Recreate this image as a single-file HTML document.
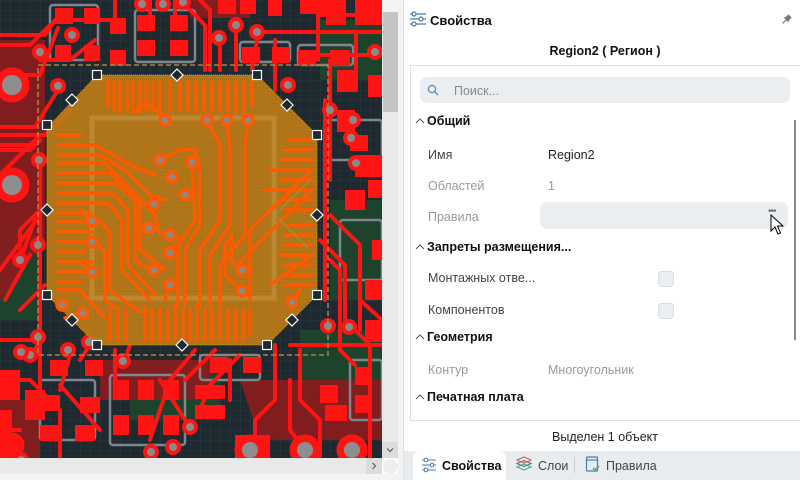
<!DOCTYPE html>
<html><head><meta charset="utf-8"><style>
*{margin:0;padding:0;box-sizing:border-box}
body{width:800px;height:480px;overflow:hidden;background:#fff;font-family:"Liberation Sans","DejaVu Sans",sans-serif;position:relative}
.a{position:absolute}
.t{font-size:12.5px;color:#222;white-space:nowrap}
.g{color:#999}
.h{font-weight:bold;font-size:12.5px;color:#111}
.cb{position:absolute;width:16px;height:16px;border:1px solid #d8dcdf;background:#eceff1;border-radius:4px}
.cv{position:absolute;width:10px;height:6px}
</style></head><body>
<svg class="a" style="left:0;top:0" width="382" height="458" viewBox="0 0 382 458">
<defs>
<pattern id="gr" width="10" height="10" patternUnits="userSpaceOnUse"><path d="M10 0H0V10" fill="none" stroke="#34424a" stroke-width="0.6"/></pattern>
<pattern id="dt" width="4" height="4" patternUnits="userSpaceOnUse"><rect width="4" height="4" fill="#bc7a16"/><rect x="1" y="1" width="1" height="1" fill="#e08a08"/></pattern>
</defs>
<rect width="382" height="458" fill="#1e2a30"/>
<rect width="382" height="458" fill="url(#gr)"/>
<g fill="#1d4a2c" opacity="0.8">
<rect x="320" y="20" width="62" height="60"/><rect x="330" y="200" width="52" height="100"/><rect x="0" y="230" width="40" height="90"/><rect x="130" y="360" width="90" height="60"/><rect x="300" y="330" width="82" height="60"/>
</g>
<g fill="#8c1c1e" opacity="0.9">
<path d="M0 40H45V240L0 300Z"/><path d="M240 380H382V440H260Z"/><path d="M0 400H40V458H0Z"/>
<rect x="190" y="0" width="60" height="18"/><rect x="100" y="360" width="110" height="40"/>
</g>
<g fill="none" stroke="#7d878d" stroke-width="2.5">
<rect x="50" y="5" width="48" height="55" rx="3"/><rect x="135" y="10" width="60" height="52" rx="3"/><rect x="240" y="42" width="50" height="20" rx="3"/><rect x="298" y="45" width="55" height="20" rx="3"/>
<rect x="40" y="380" width="55" height="60" rx="3"/><rect x="110" y="375" width="75" height="70" rx="3"/><rect x="200" y="355" width="60" height="25" rx="3"/><rect x="350" y="360" width="32" height="60" rx="3"/><rect x="330" y="120" width="52" height="40" rx="3"/><rect x="340" y="220" width="42" height="60" rx="3"/>
</g>
<g fill="none" stroke="#ff1414" stroke-width="4" stroke-linecap="round" stroke-linejoin="round">
<path d="M0 35H45L55 20H110"/><path d="M0 45H30L50 25"/><path d="M40 60H70L95 40"/><path d="M0 75H40L58 28"/>
<path d="M0 127H35L58 90"/><path d="M0 135H45L70 110"/><path d="M0 145H35"/><path d="M0 150H30L40 140"/>
<path d="M0 175L40 135"/><path d="M0 270L40 215V160"/><path d="M20 260L35 220"/><path d="M5 300L30 255"/><path d="M20 250V230L40 210"/>
<path d="M40 170V400"/><path d="M20 310L45 285"/><path d="M0 340H40"/><path d="M30 360L40 340"/>
<path d="M150 0V25"/><path d="M115 0V18"/><path d="M175 0V18"/><path d="M200 0L210 10V70"/><path d="M185 5L205 25V70"/>
<path d="M220 40V70"/><path d="M236 30V70"/><path d="M258 35L252 70"/><path d="M260 32H382"/><path d="M275 40V90"/><path d="M356 32V90"/>
<path d="M320 15H382"/><path d="M318 0V60"/><path d="M330 60V180"/><path d="M325 100V300"/><path d="M330 215L360 245V300L382 320"/>
<path d="M320 240L345 265V320L370 345V458"/><path d="M330 260L340 270V350L355 365"/><path d="M360 300V330"/>
<path d="M300 350V400L320 420V458"/><path d="M290 380V430L305 450"/><path d="M275 345V400L255 420V458"/>
<path d="M215 350L185 380"/><path d="M195 350L170 380"/><path d="M230 360V400"/>
<path d="M240 355L210 385L200 410"/><path d="M160 380L185 420"/><path d="M170 380L150 440"/>
<path d="M115 350V380"/><path d="M60 385L100 430"/><path d="M0 380H30L60 410V458"/><path d="M0 430H20"/>
<path d="M130 345L125 360"/><path d="M90 345L80 360"/><path d="M70 355L60 390"/>
<path d="M290 345H382"/><path d="M300 55H382"/>
</g>
<g fill="#ff1414">
<rect x="55" y="8" width="18" height="16"/><rect x="84" y="8" width="16" height="16"/><rect x="55" y="45" width="16" height="16"/><rect x="84" y="45" width="16" height="16"/>
<rect x="110" y="18" width="16" height="16"/><rect x="110" y="50" width="16" height="16"/>
<rect x="137" y="15" width="18" height="16"/><rect x="170" y="15" width="18" height="16"/><rect x="137" y="40" width="18" height="16"/><rect x="170" y="40" width="18" height="16"/>
<rect x="218" y="0" width="18" height="14"/><rect x="240" y="0" width="16" height="14"/><rect x="268" y="0" width="14" height="16"/><rect x="300" y="0" width="40" height="14"/><rect x="326" y="0" width="20" height="25"/><rect x="355" y="0" width="27" height="25"/>
<rect x="242" y="47" width="18" height="16"/><rect x="272" y="47" width="18" height="16"/><rect x="298" y="50" width="18" height="16"/><rect x="330" y="50" width="20" height="16"/>
<rect x="337" y="70" width="18" height="22"/><rect x="337" y="110" width="18" height="22"/><rect x="368" y="75" width="14" height="22"/>
<rect x="350" y="135" width="18" height="16"/><rect x="355" y="155" width="27" height="22"/><rect x="368" y="180" width="14" height="18"/><rect x="345" y="190" width="20" height="20"/>
<rect x="372" y="240" width="10" height="20"/><rect x="365" y="280" width="17" height="20"/><rect x="365" y="320" width="17" height="22"/>
<rect x="0" y="370" width="20" height="30"/><rect x="25" y="390" width="20" height="30"/><rect x="0" y="410" width="12" height="48"/>
<rect x="50" y="360" width="18" height="16"/><rect x="85" y="360" width="18" height="16"/><rect x="40" y="395" width="20" height="16"/><rect x="80" y="397" width="20" height="16"/><rect x="40" y="425" width="20" height="16"/><rect x="75" y="425" width="20" height="16"/>
<rect x="113" y="380" width="16" height="20"/><rect x="138" y="380" width="16" height="20"/><rect x="163" y="380" width="16" height="20"/><rect x="113" y="415" width="16" height="20"/><rect x="138" y="415" width="16" height="20"/><rect x="163" y="415" width="16" height="20"/>
<rect x="195" y="385" width="30" height="14"/><rect x="195" y="405" width="30" height="14"/><rect x="210" y="357" width="18" height="16"/><rect x="243" y="357" width="18" height="16"/>
<rect x="320" y="385" width="18" height="18"/><rect x="355" y="367" width="14" height="18"/><rect x="325" y="405" width="22" height="16"/><rect x="355" y="395" width="14" height="18"/>
<rect x="235" y="435" width="35" height="23"/>
</g>
<g fill="#ff1414" stroke="#ff1414">
<circle cx="12" cy="85" r="17"/><circle cx="12" cy="185" r="17"/><circle cx="250" cy="450" r="15"/><circle cx="305" cy="450" r="15"/><circle cx="352" cy="450" r="15"/><circle cx="12" cy="445" r="12"/>
</g>
<g fill="#8e8e8e"><circle cx="12" cy="85" r="10"/><circle cx="12" cy="185" r="10"/><circle cx="250" cy="450" r="8"/><circle cx="305" cy="450" r="8"/><circle cx="352" cy="450" r="8"/></g>
<g fill="#8a8a8a" stroke="#ff1414" stroke-width="4">
<circle cx="40" cy="52" r="6"/><circle cx="72" cy="35" r="6"/><circle cx="58" cy="86" r="6"/><circle cx="39" cy="160" r="6"/><circle cx="38" cy="245" r="6"/><circle cx="20" cy="260" r="6"/><circle cx="38" cy="337" r="6"/><circle cx="30" cy="355" r="6"/>
<circle cx="142" cy="4" r="6"/><circle cx="163" cy="4" r="6"/><circle cx="183" cy="2" r="6"/><circle cx="236" cy="25" r="6"/><circle cx="219" cy="38" r="6"/><circle cx="257" cy="32" r="6"/><circle cx="375" cy="52" r="6"/><circle cx="288" cy="85" r="6"/>
<circle cx="330" cy="110" r="6"/><circle cx="353" cy="120" r="6"/><circle cx="351" cy="138" r="6"/><circle cx="356" cy="163" r="6"/><circle cx="328" cy="326" r="6"/><circle cx="349" cy="327" r="6"/>
<circle cx="123" cy="361" r="6"/><circle cx="68" cy="350" r="6"/><circle cx="89" cy="342" r="6"/><circle cx="21" cy="352" r="6"/><circle cx="190" cy="427" r="6"/><circle cx="173" cy="447" r="6"/><circle cx="151" cy="452" r="6"/><circle cx="21" cy="460" r="6"/>
</g>
<rect x="38" y="65" width="290" height="290" fill="none" stroke="#a8814a" stroke-width="1.6" stroke-dasharray="5,3"/>
<polygon points="97,75 257,75 317,135 317,295 267,345 97,345 47,295 47,128" fill="url(#dt)" opacity="0.92" stroke="#e8a000" stroke-width="1" stroke-dasharray="1,1"/>
<rect x="92" y="118" width="182" height="180" fill="none" stroke="#c9a050" stroke-width="5" opacity="0.45"/>
<g fill="none" stroke="#ff5a00" stroke-width="3.4" stroke-linecap="round" stroke-linejoin="round">
<path d="M108 80V105"/><path d="M114 82V110"/><path d="M120 82V112"/><path d="M127 82V110"/><path d="M133 82V112"/><path d="M140 82V112"/><path d="M146 82V110"/><path d="M153 82V110"/><path d="M160 82V112"/><path d="M170 82V110"/><path d="M180 82V110"/><path d="M188 82V110"/><path d="M196 82V112"/><path d="M204 82V110"/><path d="M212 82V110"/><path d="M220 82V110"/><path d="M228 82V110"/><path d="M236 82V112"/><path d="M244 82V112"/><path d="M252 82V105"/>
<path d="M110 310V340"/><path d="M118 310V340"/><path d="M126 310V340"/><path d="M145 308V340"/><path d="M152 310V340"/><path d="M160 310V340"/><path d="M168 310V340"/><path d="M175 305V340"/><path d="M183 310V340"/><path d="M190 310V340"/><path d="M197 305V340"/><path d="M205 310V340"/><path d="M212 310V340"/><path d="M220 310V340"/><path d="M228 310V340"/><path d="M235 310V340"/><path d="M243 310V340"/><path d="M250 310V335"/>
<path d="M58 135H80"/><path d="M58 145H95L130 165L155 175"/><path d="M58 155H100L125 170L150 195L165 200"/><path d="M58 163H105L155 215L160 235"/>
<path d="M58 173H110L140 200V250L165 270"/><path d="M58 183H115L135 200V260L150 270"/><path d="M58 193H112L128 210V265L155 295"/><path d="M58 203H108L122 220V270L150 300"/>
<path d="M58 213H90"/><path d="M58 222H100L110 232V290L140 312"/><path d="M58 232H92"/><path d="M58 242H95L105 252V300L118 310"/><path d="M58 252H85"/><path d="M58 262H92"/><path d="M58 272H90"/><path d="M58 282H80"/><path d="M58 290H80L105 318"/>
<path d="M288 140H312"/><path d="M285 150H312"/><path d="M280 160H312"/><path d="M270 170H312L250 230V300"/><path d="M280 180H312"/><path d="M265 190H312L240 262"/><path d="M280 200H312"/><path d="M285 210H312"/><path d="M285 225H312"/><path d="M285 235H312"/><path d="M285 245H312"/><path d="M280 255H312L270 285"/><path d="M285 265H312"/><path d="M285 275H312"/><path d="M285 285H312"/>
<path d="M207 120L220 145V220L200 250V305"/><path d="M227 120L230 150V225L210 255V305"/><path d="M248 120L245 145V235L220 265V305"/><path d="M165 120L150 105H140L135 112"/><path d="M160 160L180 150H195L200 170V225L185 250V305"/>
<path d="M192 162L195 220L178 245V305"/><path d="M170 235L180 240"/><path d="M170 253L175 245"/><path d="M170 280L165 300"/><path d="M242 270L232 262V235"/><path d="M242 291L225 275V245L232 235"/>
<path d="M92 221L80 210"/><path d="M92 242L75 242"/><path d="M92 272L80 262"/><path d="M292 302L300 290"/><path d="M83 313L65 318"/>
</g>
<g fill="#8a8a8a" stroke="#ff5a00" stroke-width="3.5">
<circle cx="165" cy="120" r="5"/><circle cx="207" cy="120" r="5"/><circle cx="227" cy="120" r="5"/><circle cx="248" cy="120" r="5"/><circle cx="160" cy="160" r="5"/><circle cx="192" cy="162" r="5"/><circle cx="172" cy="177" r="5"/><circle cx="185" cy="195" r="5"/><circle cx="154" cy="204" r="5"/><circle cx="149" cy="228" r="5"/><circle cx="170" cy="235" r="5"/><circle cx="92" cy="221" r="5"/><circle cx="92" cy="242" r="5"/><circle cx="92" cy="272" r="5"/><circle cx="154" cy="270" r="5"/><circle cx="170" cy="253" r="5"/><circle cx="170" cy="285" r="5"/><circle cx="242" cy="270" r="5"/><circle cx="242" cy="291" r="5"/><circle cx="62" cy="305" r="5"/><circle cx="83" cy="313" r="5"/><circle cx="292" cy="302" r="5"/>
</g>
<path d="M275 215L310 180M275 215L310 250" stroke="#8fa040" stroke-width="1" fill="none"/>
<g fill="#1f2a30" stroke="#fff" stroke-width="1.2">
<rect x="92.5" y="70.5" width="9" height="9"/><rect x="252.5" y="70.5" width="9" height="9"/><rect x="312.5" y="130.5" width="9" height="9"/><rect x="312.5" y="290.5" width="9" height="9"/><rect x="262.5" y="340.5" width="9" height="9"/><rect x="92.5" y="340.5" width="9" height="9"/><rect x="42.5" y="290.5" width="9" height="9"/><rect x="42.5" y="120.5" width="9" height="9"/>
<path d="M177 69L183 75L177 81L171 75Z"/><path d="M287 99L293 105L287 111L281 105Z"/><path d="M317 209L323 215L317 221L311 215Z"/><path d="M292 314L298 320L292 326L286 320Z"/><path d="M182 339L188 345L182 351L176 345Z"/><path d="M72 314L78 320L72 326L66 320Z"/><path d="M47 204L53 210L47 216L41 210Z"/><path d="M72 94L78 100L72 106L66 100Z"/>
</g>
</svg>
<div class="a" style="left:382px;top:0;width:16px;height:458px;background:#e9e9e9"></div>
<div class="a" style="left:382px;top:0;width:16px;height:12px;background:#f4f4f4"></div>
<div class="a" style="left:383px;top:12px;width:15px;height:100px;background:#c4c4c4"></div>
<div class="a" style="left:382px;top:442px;width:16px;height:16px;background:#dcdcdc"></div>
<svg class="a" style="left:386px;top:447px" width="8" height="6" viewBox="0 0 8 6"><path d="M1 1.5L4 4.5L7 1.5" fill="none" stroke="#555" stroke-width="1"/></svg>
<div class="a" style="left:0;top:458px;width:382px;height:16px;background:#e9e9e9"></div>
<div class="a" style="left:366px;top:458px;width:16px;height:16px;background:#dcdcdc"></div>
<svg class="a" style="left:371px;top:462px" width="6" height="8" viewBox="0 0 6 8"><path d="M1.5 1L4.5 4L1.5 7" fill="none" stroke="#555" stroke-width="1"/></svg>
<div class="a" style="left:383px;top:459px;width:15px;height:15px;background:#eee;border-radius:50%"></div>
<div class="a" style="left:0;top:474px;width:403px;height:6px;background:#f4f4f4"></div>
<div class="a" style="left:398px;top:0;width:5px;height:480px;background:#f3f3f3"></div>
<div class="a" style="left:403px;top:0;width:1px;height:480px;background:#e2e2e2"></div>
<svg class="a" style="left:409px;top:11px" width="18" height="16" viewBox="0 0 18 16" fill="none" stroke="#4a7ab0" stroke-width="1.2"><path d="M1 3H17M1 8H17M1 13H17"/><circle cx="5" cy="3" r="2" fill="#fff"/><circle cx="12" cy="8" r="2" fill="#fff"/><circle cx="5" cy="13" r="2" fill="#fff"/></svg>
<div class="a h" style="left:430px;top:13px;font-size:13px">Свойства</div>
<svg class="a" style="left:781px;top:13px" width="12" height="12" viewBox="0 0 12 12"><path d="M7 1L11 5L9.5 5.5L7.5 8L7.5 9.5L2.5 4.5L4 4.5L6.5 2.5Z" fill="#777"/><path d="M5 7L1.5 10.5" stroke="#777" stroke-width="1.2"/></svg>
<div class="a h" style="left:404px;top:44px;width:402px;text-align:center;font-size:12.5px">Region2 ( Регион )</div>
<div class="a" style="left:410px;top:65px;width:392px;height:356px;border:1px solid #dde2e5;border-right:none"></div>
<div class="a" style="left:794px;top:120px;width:2px;height:220px;background:#888"></div>
<div class="a" style="left:420px;top:77px;width:370px;height:26px;background:#ebeef0;border-radius:7px"></div>
<svg class="a" style="left:427px;top:84px" width="12" height="12" viewBox="0 0 12 12" fill="none" stroke="#5a8ac0" stroke-width="1.3"><circle cx="5" cy="5" r="3.6"/><path d="M7.7 7.7L11 11"/></svg>
<div class="a t" style="left:454px;top:84px;color:#888">Поиск...</div>
<svg class="cv" style="left:415px;top:118px" viewBox="0 0 10 6"><path d="M1 5L5 1L9 5" fill="none" stroke="#555" stroke-width="1"/></svg>
<div class="a h" style="left:427px;top:114px">Общий</div>
<div class="a t" style="left:428px;top:148px;color:#444">Имя</div>
<div class="a t" style="left:548px;top:148px">Region2</div>
<div class="a t g" style="left:428px;top:179px">Областей</div>
<div class="a t g" style="left:548px;top:179px">1</div>
<div class="a t g" style="left:428px;top:210px">Правила</div>
<div class="a" style="left:540px;top:202px;width:248px;height:27px;background:#ebeef0;border-radius:7px"></div>
<div class="a t" style="left:768px;top:206px;color:#777;font-size:10px;letter-spacing:-1px">•••</div>
<svg class="a" style="left:770px;top:214px" width="14" height="22" viewBox="0 0 14 22"><path d="M1 1V17L5 13L8 20L10.5 19L7.5 12H13Z" fill="#fff" stroke="#000" stroke-width="1"/></svg>
<svg class="cv" style="left:415px;top:244px" viewBox="0 0 10 6"><path d="M1 5L5 1L9 5" fill="none" stroke="#555" stroke-width="1"/></svg>
<div class="a h" style="left:427px;top:240px">Запреты размещения...</div>
<div class="a t" style="left:428px;top:271px;color:#444">Монтажных отве...</div>
<div class="cb" style="left:658px;top:271px"></div>
<div class="a t" style="left:428px;top:303px;color:#444">Компонентов</div>
<div class="cb" style="left:658px;top:303px"></div>
<svg class="cv" style="left:415px;top:334px" viewBox="0 0 10 6"><path d="M1 5L5 1L9 5" fill="none" stroke="#555" stroke-width="1"/></svg>
<div class="a h" style="left:427px;top:330px">Геометрия</div>
<div class="a t g" style="left:428px;top:363px">Контур</div>
<div class="a t g" style="left:548px;top:363px">Многоугольник</div>
<svg class="cv" style="left:415px;top:394px" viewBox="0 0 10 6"><path d="M1 5L5 1L9 5" fill="none" stroke="#555" stroke-width="1"/></svg>
<div class="a h" style="left:427px;top:390px">Печатная плата</div>
<div class="a t" style="left:404px;top:430px;width:402px;text-align:center">Выделен 1 объект</div>
<div class="a" style="left:404px;top:451px;width:396px;height:29px;background:#e9ecee"></div>
<div class="a" style="left:413px;top:451px;width:93px;height:29px;background:#fff;border-radius:6px 6px 0 0"></div>
<svg class="a" style="left:421px;top:457px" width="16" height="16" viewBox="0 0 16 16" fill="none" stroke="#4a7ab0" stroke-width="1.1"><path d="M1 3H15M1 8H15M1 13H15"/><circle cx="5" cy="3" r="1.8" fill="#fff"/><circle cx="11" cy="8" r="1.8" fill="#fff"/><circle cx="5" cy="13" r="1.8" fill="#fff"/></svg>
<div class="a h" style="left:442px;top:459px">Свойства</div>
<svg class="a" style="left:515px;top:455px" width="18" height="18" viewBox="0 0 18 18" fill="none" stroke-width="1.2"><path d="M2 12L9 15L16 12L9 9Z" stroke="#5aa878"/><path d="M2 8.5L9 11.5L16 8.5L9 5.5Z" stroke="#4a7ab0"/><path d="M2 5L9 8L16 5L9 2Z" stroke="#e0604a"/></svg>
<div class="a t" style="left:538px;top:459px;color:#444">Слои</div>
<div class="a" style="left:574px;top:457px;width:1px;height:16px;background:#ccc"></div>
<svg class="a" style="left:585px;top:455px" width="16" height="18" viewBox="0 0 16 18" fill="none" stroke-width="1.2"><rect x="1.5" y="2" width="11" height="14" rx="1" stroke="#4a7ab0"/><path d="M1.5 5H12.5" stroke="#4a7ab0"/><path d="M8 13L10 15L14 11" stroke="#5aa878" stroke-width="1.6"/></svg>
<div class="a t" style="left:606px;top:459px;color:#444">Правила</div>
</body></html>
